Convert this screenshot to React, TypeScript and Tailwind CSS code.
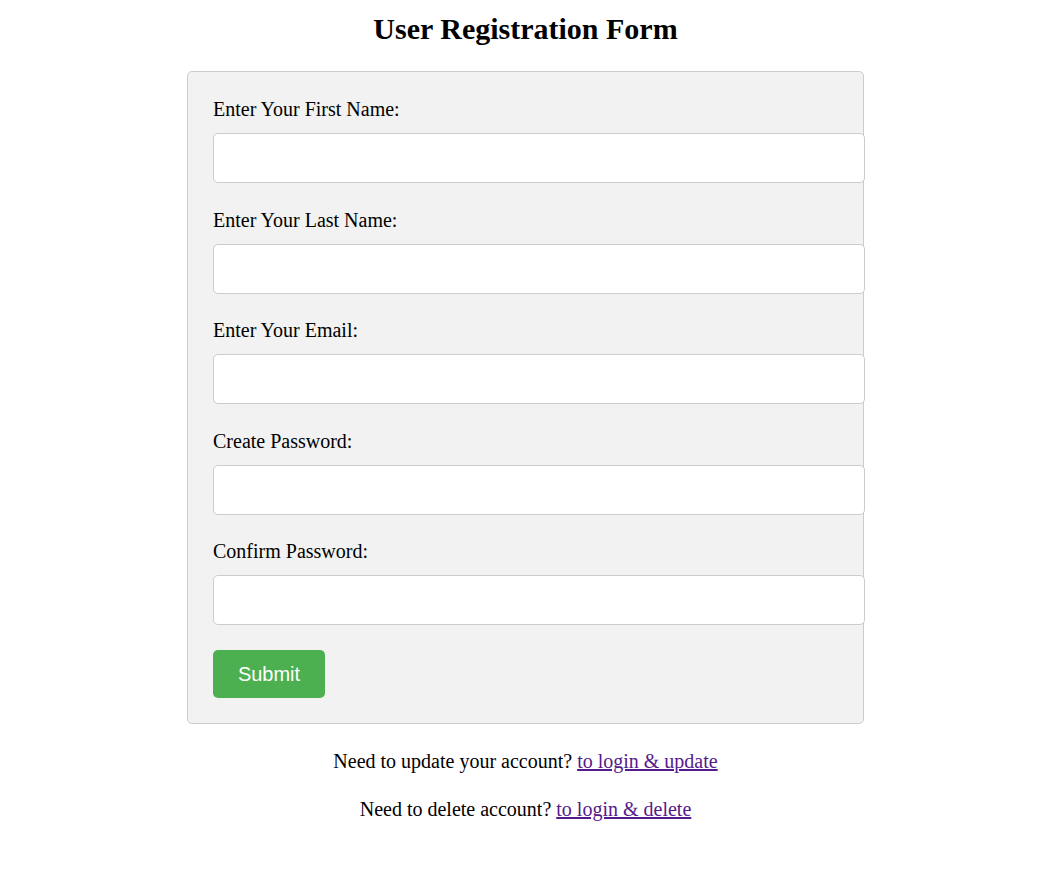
export default function App() {
  const fields = [
    { label: 'Enter Your First Name:', type: 'text' },
    { label: 'Enter Your Last Name:', type: 'text' },
    { label: 'Enter Your Email:', type: 'email' },
    { label: 'Create Password:', type: 'password' },
    { label: 'Confirm Password:', type: 'password' },
  ]

  return (
    <div className="min-h-screen bg-white pl-[10px] pt-[11px] text-black font-['Liberation_Serif',serif]">
      <h1 className="text-center text-[30px] font-bold leading-[35px]">User Registration Form</h1>

      {/* Form card */}
      <form className="mx-auto mt-[25px] w-[677px] rounded-[5px] border border-[#cccccc] bg-[#f2f2f2] p-[25px]">
        {fields.map((field, idx) => (
          <div key={idx} className={idx === 0 ? '' : 'mt-[24.5px]'}>
            <label className="block text-[20px] leading-[24px]">{field.label}</label>
            <input
              type={field.type}
              className="mt-[12px] block h-[50px] w-[652px] rounded-[5px] border border-[#cccccc] bg-white px-3 outline-none"
            />
          </div>
        ))}
        <button
          type="button"
          className="mt-[25px] block h-[48px] w-[112px] rounded-[5px] bg-[#4caf50] text-[20px] text-white font-['Liberation_Sans',Arial,sans-serif]"
        >
          Submit
        </button>
      </form>

      {/* Links */}
      <p className="mt-[25px] text-center text-[20px] leading-[24px]">
        Need to update your account?{' '}
        <a href="#" className="text-[#551a8b] underline">
          to login &amp; update
        </a>
      </p>
      <p className="mt-[24px] text-center text-[20px] leading-[24px]">
        Need to delete account?{' '}
        <a href="#" className="text-[#551a8b] underline">
          to login &amp; delete
        </a>
      </p>
    </div>
  )
}
